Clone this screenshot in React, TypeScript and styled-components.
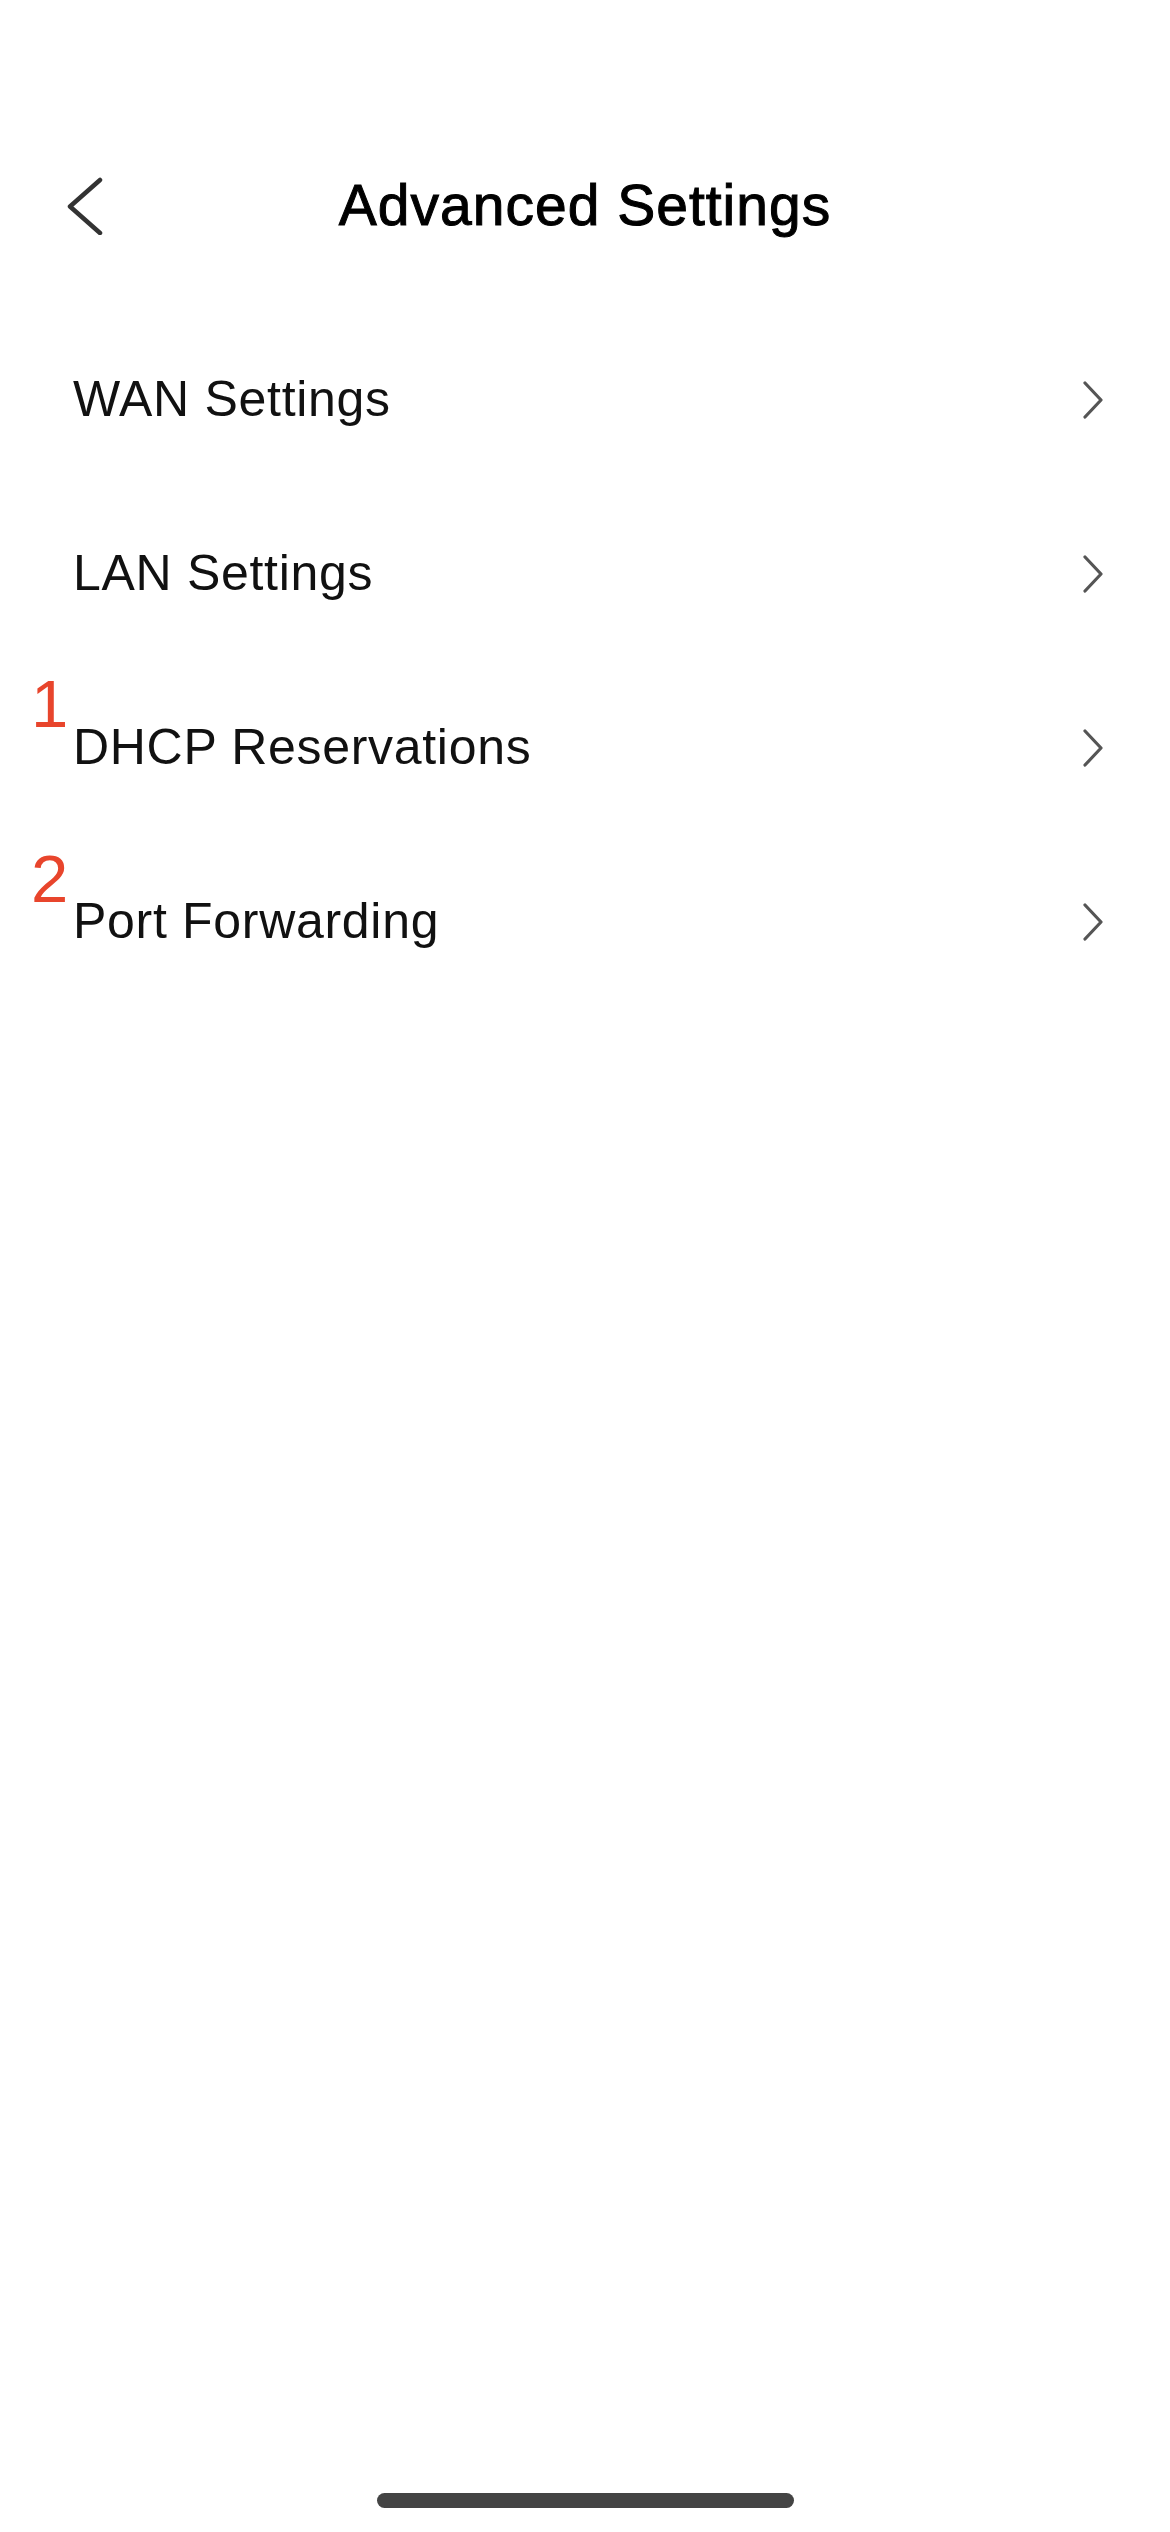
import React from 'react';
import styled, { createGlobalStyle } from 'styled-components';

const GlobalStyle = createGlobalStyle`
  html, body {
    margin: 0;
    padding: 0;
    background-color: #ffffff;
  }
  body {
    font-family: "Liberation Sans", Arial, sans-serif;
    color: #000000;
  }
`;

const Page = styled.div`
  display: flex;
  flex-direction: column;
  width: 1170px;
  min-height: 2532px;
  background-color: #ffffff;
`;

const Header = styled.header`
  display: grid;
  grid-template-columns: 1fr auto 1fr;
  align-items: center;
  height: 110px;
  margin-top: 151px;
`;

const BackButton = styled.button`
  display: flex;
  align-items: center;
  justify-self: start;
  margin: 0;
  padding: 0 0 0 67px;
  border: none;
  background: none;
  cursor: pointer;
`;

const Title = styled.h1`
  margin: 0;
  font-size: 57px;
  font-weight: 400;
  line-height: 1.15;
  letter-spacing: 1px;
  color: #000000;
  -webkit-text-stroke: 1px #000000;
`;

const MenuList = styled.ul`
  list-style: none;
  margin: 0;
  padding: 52px 0 0 0;
`;

const MenuRow = styled.li`
  position: relative;
  display: flex;
  align-items: center;
  justify-content: space-between;
  height: 174px;
  padding: 0 67px 0 73px;
  cursor: pointer;
`;

const RowLabel = styled.span`
  font-size: 50px;
  line-height: 1.15;
  letter-spacing: 0.7px;
  color: #111111;
`;

const Marker = styled.span<{ $top: number; $left: number }>`
  position: absolute;
  top: ${(p) => p.$top}px;
  left: ${(p) => p.$left}px;
  font-size: 67px;
  line-height: 1;
  color: #e8452c;
`;

const Spacer = styled.div`
  flex: 1;
`;

const HomeBar = styled.div`
  width: 417px;
  height: 15px;
  margin: 0 auto 24px auto;
  border-radius: 8px;
  background-color: #444444;
`;

const BackIcon = () => (
  <svg width="36" height="58" viewBox="0 0 36 58" fill="none">
    <path
      d="M33 3 L3 29.5 L33 56"
      stroke="#333333"
      strokeWidth="4.5"
      strokeLinecap="round"
      strokeLinejoin="round"
    />
  </svg>
);

const ChevronIcon = () => (
  <svg width="20" height="38" viewBox="0 0 20 38" fill="none">
    <path
      d="M2 2 L18 19 L2 36"
      stroke="#555555"
      strokeWidth="3.2"
      strokeLinecap="round"
      strokeLinejoin="round"
    />
  </svg>
);

const items = [
  { label: 'WAN Settings' },
  { label: 'LAN Settings' },
  { label: 'DHCP Reservations', marker: '1', top: 9, left: 31 },
  { label: 'Port Forwarding', marker: '2', top: 10, left: 31 },
];

export default function App() {
  return (
    <>
      <GlobalStyle />
      <Page>
        <Header>
          <BackButton aria-label="Back">
            <BackIcon />
          </BackButton>
          <Title>Advanced Settings</Title>
          <div />
        </Header>
        <MenuList>
          {items.map((item) => (
            <MenuRow key={item.label}>
              {item.marker && (
                <Marker $top={item.top ?? 0} $left={item.left ?? 0}>
                  {item.marker}
                </Marker>
              )}
              <RowLabel>{item.label}</RowLabel>
              <ChevronIcon />
            </MenuRow>
          ))}
        </MenuList>
        <Spacer />
        <HomeBar />
      </Page>
    </>
  );
}
